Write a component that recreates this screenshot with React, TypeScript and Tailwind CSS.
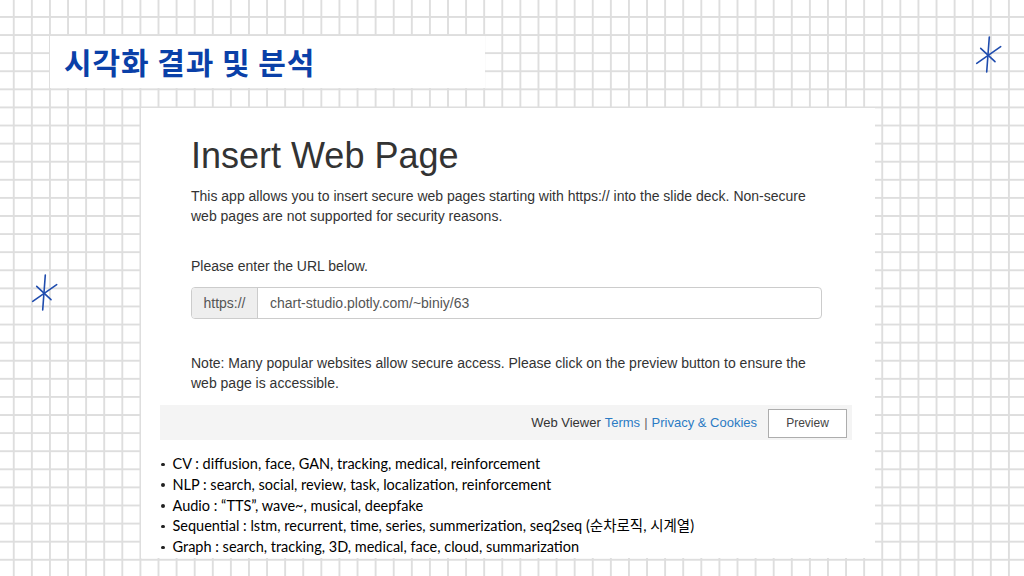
import React from "react"

function Star({ className }: { className?: string }) {
  return (
    <svg
      className={className}
      width="28"
      height="38"
      viewBox="0 0 28 38"
      fill="none"
      stroke="#1f4cae"
      strokeWidth="1.6"
      strokeLinecap="round"
    >
      <line x1="15.3" y1="1" x2="12.7" y2="36" />
      <line x1="2.7" y1="27.3" x2="26.7" y2="10.7" />
      <line x1="6.7" y1="12.3" x2="21" y2="25.7" />
    </svg>
  )
}

const bullets = [
  "CV : diffusion, face, GAN, tracking, medical, reinforcement",
  "NLP : search, social, review, task, localization, reinforcement",
  "Audio : \u201cTTS\u201d, wave~, musical, deepfake",
  "Sequential : lstm, recurrent, time, series, summerization, seq2seq (순차로직, 시계열)",
  "Graph : search, tracking, 3D, medical, face, cloud, summarization",
]

export default function App() {
  return (
    <div
      className="relative h-[576px] w-[1024px] overflow-hidden bg-white
      bg-[linear-gradient(to_right,#dedede_1.5px,transparent_1.5px),linear-gradient(to_bottom,#dedede_1.5px,transparent_1.5px)]
      [background-position:12.8px_16px] [background-size:18.1px_18.1px]"
    >
      <Star className="absolute left-[974px] top-[36px]" />
      <Star className="absolute left-[30px] top-[274px]" />

      <div className="ml-[50px] mt-[36px] flex h-[52px] w-[435px] items-center bg-white pb-[3px] pl-[14px]">
        <h1 className="font-['Noto_Sans_CJK_KR',sans-serif] text-[30px] font-bold leading-none tracking-[0.9px] text-[#0a40a8]">
          시각화 결과 및 분석
        </h1>
      </div>

      <div className="ml-[141px] mt-[20px] flex h-[450px] w-[734px] flex-col bg-white">
        <div className="pl-[50px] pr-[52px] pt-[26px] font-['Liberation_Sans',Arial,sans-serif] text-[#333]">
          <h2 className="text-[36px] font-normal leading-[44px] text-[#333]">
            Insert Web Page
          </h2>
          <p className="mt-[8px] text-[14px] leading-[20px]">
            This app allows you to insert secure web pages starting with
            https:// into the slide deck. Non-secure web pages are not
            supported for security reasons.
          </p>
          <p className="mt-[30px] text-[14px] leading-[20px]">
            Please enter the URL below.
          </p>
          <div className="mt-[11px] flex h-[32px] w-[631px] overflow-hidden rounded-[4px] border border-[#ccc] text-[14px]">
            <div className="flex w-[66px] items-center justify-center border-r border-[#ccc] bg-[#eee] text-[#555]">
              https://
            </div>
            <div className="flex flex-1 items-center pl-[12px] text-[#555]">
              chart-studio.plotly.com/~biniy/63
            </div>
          </div>
          <p className="mt-[34px] text-[14px] leading-[20px]">
            Note: Many popular websites allow secure access. Please click on
            the preview button to ensure the web page is accessible.
          </p>
        </div>

        <div className="ml-[19px] mt-[12px] flex h-[35px] w-[692px] items-center justify-end bg-[#f4f4f4] pr-[5px] pt-[1px] font-['Liberation_Sans',Arial,sans-serif] text-[13px]">
          <span className="text-[#333]">Web Viewer</span>
          <span className="ml-[4px] text-[#2b7bc4]">Terms</span>
          <span className="mx-[4px] text-[#666]">|</span>
          <span className="text-[#2b7bc4]">Privacy &amp; Cookies</span>
          <button className="ml-[11px] h-[29px] w-[79px] border border-[#adadad] bg-white text-[12px] text-[#444]">
            Preview
          </button>
        </div>

        <ul className="ml-[19px] mt-[14px] font-['Lato','Noto_Sans_CJK_KR',sans-serif] text-[14.5px] leading-[20.75px] text-black">
          {bullets.map((b) => (
            <li key={b} className="flex h-[20.75px] items-center">
              <span className="ml-[1px] mr-[8px] h-[3.5px] w-[3.5px] shrink-0 rounded-full bg-[#222]" />
              <span>{b}</span>
            </li>
          ))}
        </ul>
      </div>
    </div>
  )
}
